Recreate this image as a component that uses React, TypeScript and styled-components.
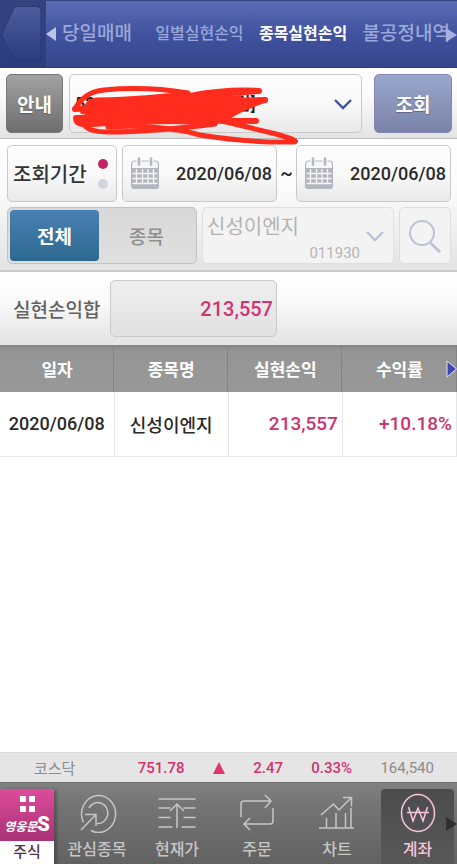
import React from 'react';
import styled, { createGlobalStyle, css } from 'styled-components';

const GlobalStyle = createGlobalStyle`
  * { box-sizing: border-box; }
  body { margin: 0; background: #fff; }
  body, button, input, select {
    font-family: Roboto, "Noto Sans CJK KR", sans-serif;
    letter-spacing: 0;
  }
  button, input, select { margin: 0; padding: 0; cursor: pointer; }
`;

const Page = styled.div`
  min-height: 100vh;
  display: flex;
  flex-direction: column;
  overflow-x: hidden;
`;

const Header = styled.header`
  display: flex;
  height: 68px;
  background: linear-gradient(#5c6db4, #4153a0 50%, #35468b);
  border-top: 1px solid #34447f;
  border-bottom: 1px solid #2c3a76;
`;

const BackButton = styled.button`
  flex: 0 0 46px;
  border: 0;
  background: linear-gradient(#34437f, #2d3c7e);
  svg { display: block; }
`;

const TabList = styled.nav`
  flex: 1;
  min-width: 0;
  display: flex;
  align-items: center;
  justify-content: space-between;
`;

const Tab = styled.button<{ $active?: boolean; $small?: boolean }>`
  border: 0;
  background: none;
  white-space: nowrap;
  line-height: 28px;
  font-size: ${(p) => (p.$small ? 16 : 19)}px;
  font-weight: ${(p) => (p.$active ? 700 : 500)};
  color: ${(p) => (p.$active ? '#fff' : '#9ba7d8')};
`;

const EdgeTab = styled.div<{ $end?: boolean }>`
  position: relative;
  display: flex;
  align-items: center;
  gap: 6px;
  padding-right: ${(p) => (p.$end ? 7 : 8)}px;
`;

const EndArrow = styled.svg`
  position: absolute;
  right: 0;
  top: 8px;
`;

const Panel = styled.section`
  background: linear-gradient(#fff, #fafafa 40%, #e3e3e3);
`;

const AccountPanel = styled(Panel)`
  position: relative;
  display: flex;
  gap: 6px;
  padding: 6px 5px 5px 6px;
  border-bottom: 1px solid #bcbcbc;
`;

const SolidButton = styled.button<{ $tone: 'gray' | 'blue' }>`
  height: 59px;
  border-radius: 5px;
  color: #fff;
  font-size: 19px;
  font-weight: 700;
  text-shadow: 0 1px 1px rgba(0, 0, 0, 0.3);
  ${(p) =>
    p.$tone === 'gray'
      ? css`
          flex: 0 0 57px;
          border: 1px solid #777;
          background: linear-gradient(#a2a2a2, #6d6d6d);
        `
      : css`
          flex: 0 0 78px;
          margin-left: 6px;
          border: 1px solid #8088b2;
          background: linear-gradient(#9ba7cc, #7a82aa);
        `}
`;

const fieldFrame = css`
  border: 1px solid #c9c9c9;
  border-radius: 5px;
  background: linear-gradient(#fdfdfd, #f9f9f9 50%, #e9e9e9);
`;

const SelectWrap = styled.label`
  position: relative;
  flex: 1;
  min-width: 0;
  display: flex;
  ${fieldFrame}
`;

const Chevron = styled.svg`
  position: absolute;
  right: 8px;
  top: 50%;
  margin-top: -8px;
  pointer-events: none;
`;

const AccountSelect = styled.select`
  appearance: none;
  width: 100%;
  border: 0;
  background: none;
  padding: 0 40px 0 5px;
  font-size: 18px;
  font-weight: 500;
  color: #222;
`;

const Scribble = styled.svg`
  position: absolute;
  left: 68px;
  top: 14px;
  z-index: 2;
  pointer-events: none;
`;

const FilterPanel = styled(Panel)`
  display: flex;
  flex-direction: column;
  gap: 5px;
  padding: 6px 6px 6px 7px;
  border-bottom: 2px solid #cacaca;
`;

const FilterRow = styled.div`
  display: flex;
  align-items: stretch;
  height: 57px;
  gap: 5px;
`;

const PeriodButton = styled.button`
  ${fieldFrame}
  flex: 0 0 110px;
  display: flex;
  align-items: center;
  justify-content: space-between;
  padding: 0 8px 0 5px;
  font-size: 20px;
  font-weight: 500;
  color: #333;
  white-space: nowrap;
`;

const Dots = styled.span`
  display: flex;
  flex-direction: column;
  gap: 10px;
`;

const Dot = styled.span<{ $on?: boolean }>`
  width: 10px;
  height: 10px;
  border-radius: 50%;
  background: ${(p) => (p.$on ? '#c2255f' : '#d2d5e0')};
`;

const DateField = styled.label`
  ${fieldFrame}
  flex: 1;
  min-width: 0;
  display: flex;
  align-items: center;
  padding: 0 4px 0 8px;
  svg { flex: none; }
`;

const DateInput = styled.input`
  flex: 1;
  min-width: 0;
  border: 0;
  background: none;
  text-align: right;
  font-size: 18px;
  font-weight: 500;
  color: #2a2a2a;
`;

const Tilde = styled.span`
  align-self: center;
  width: 9px;
  font-size: 19px;
  font-weight: 500;
  color: #222;
  display: flex;
  justify-content: center;
`;

const Segmented = styled.div`
  flex: 0 0 190px;
  display: flex;
  padding: 2px;
  border: 1px solid #c2c2c2;
  border-radius: 5px;
  background: linear-gradient(#d8d8d8, #dfdfdf);
`;

const Segment = styled.button<{ $active?: boolean }>`
  flex: ${(p) => (p.$active ? '0 0 89px' : '1 1 0')};
  border: 0;
  border-radius: 4px;
  font-size: 19px;
  font-weight: ${(p) => (p.$active ? 700 : 500)};
  color: ${(p) => (p.$active ? '#fff' : '#8e8e8e')};
  background: ${(p) => (p.$active ? 'linear-gradient(#4a80b3, #2c698f)' : 'none')};
`;

const StockPicker = styled.button`
  position: relative;
  flex: 1;
  min-width: 0;
  display: flex;
  flex-direction: column;
  justify-content: space-between;
  padding: 6px 33px 0 4px;
  border: 1px solid #dfdfdf;
  border-radius: 5px;
  background: #f3f3f3;
  color: #b3b3b3;
  text-align: left;
`;

const StockName = styled.span`
  font-size: 20px;
  line-height: 26px;
`;

const StockCode = styled.span`
  align-self: flex-end;
  font-size: 15px;
  line-height: 20px;
`;

const SearchButton = styled.button`
  flex: 0 0 52px;
  display: flex;
  align-items: center;
  justify-content: center;
  border: 1px solid #dfdfdf;
  border-radius: 5px;
  background: #f3f3f3;
`;

const SummaryPanel = styled(Panel)`
  display: flex;
  align-items: center;
  gap: 10px;
  height: 73px;
  padding: 0 0 1px 13px;
`;

const SummaryLabel = styled.span`
  width: 87px;
  white-space: nowrap;
  font-size: 19px;
  font-weight: 500;
  color: #626262;
`;

const SummaryValue = styled.output`
  flex: 0 0 167px;
  height: 57px;
  padding-right: 3px;
  border: 1px solid #c9c9c9;
  border-radius: 5px;
  background: linear-gradient(#efefef, #e1e1e1);
  text-align: right;
  font-size: 20px;
  font-weight: 500;
  line-height: 56px;
  color: #d03472;
`;

const TableArea = styled.div`
  position: relative;
  flex: 1;
`;

const Table = styled.table`
  width: 100%;
  table-layout: fixed;
  border-collapse: collapse;
`;

const HeadCell = styled.th`
  height: 47px;
  padding: 0;
  background: linear-gradient(#858585, #959595 12%, #989898);
  box-shadow: inset -1px 0 #848484;
  font-size: 17px;
  font-weight: 700;
  color: #fff;
`;

const Cell = styled.td<{ $gain?: boolean }>`
  height: 64px;
  padding: 0 ${(p) => (p.$gain ? 4 : 0)}px 0 0;
  border-bottom: 1px solid #e6e6e6;
  border-right: 1px solid #e6e6e6;
  text-align: ${(p) => (p.$gain ? 'right' : 'center')};
  font-size: ${(p) => (p.$gain ? 19 : 18)}px;
  font-weight: 500;
  color: ${(p) => (p.$gain ? '#cb3370' : '#2a2a2a')};
  white-space: nowrap;
`;

const MoreColumns = styled.button`
  position: absolute;
  right: 0;
  top: 15px;
  border: 0;
  background: none;
  svg { display: block; }
`;

const Ticker = styled.div`
  display: flex;
  align-items: center;
  justify-content: space-between;
  height: 30px;
  padding: 0 23px 0 34px;
  background: #e5e5e5;
  border-top: 1px solid #dcdcdc;
  font-size: 15px;
  color: #8c8c8c;
`;

const TickerName = styled.span`
  margin-right: 34px;
`;

const Gain = styled.span`
  font-weight: 500;
  color: #d3326f;
`;

const BottomNav = styled.nav`
  display: flex;
  height: 82px;
  padding-top: 6px;
  background: linear-gradient(#818181, #757575 25%, #626262);
  border-top: 1px solid #707070;
`;

const HomeButton = styled.button`
  flex: 0 0 54px;
  margin-right: 3px;
  display: flex;
  flex-direction: column;
  border: 0;
  border-radius: 0 4px 0 0;
  overflow: hidden;
  background: #fff;
  box-shadow: 3px 0 3px rgba(0, 0, 0, 0.25);
`;

const HomeBrand = styled.span`
  width: 100%;
  height: 52px;
  display: flex;
  flex-direction: column;
  align-items: center;
  padding-top: 7px;
  background: linear-gradient(#dd4b99, #a93277);
  color: #fff;
  white-space: nowrap;
`;

const BrandText = styled.span`
  display: flex;
  align-items: baseline;
  font-size: 12px;
  font-weight: 700;
  font-style: italic;
  line-height: 24px;
`;

const BrandMark = styled.b`
  font-size: 20px;
  font-style: normal;
`;

const HomeLabel = styled.span`
  width: 100%;
  text-align: center;
  font-size: 15px;
  font-weight: 500;
  line-height: 23px;
  color: #4e2f47;
`;

const NavItem = styled.button<{ $active?: boolean }>`
  position: relative;
  flex: ${(p) => (p.$active ? '0 0 73px' : '1 1 0')};
  min-width: 0;
  margin: 0 ${(p) => (p.$active ? '3px 0 4px' : '0')};
  display: flex;
  flex-direction: column;
  align-items: center;
  gap: 5px;
  padding: 4px 0 0;
  border: 0;
  border-radius: 4px 4px 0 0;
  background: ${(p) => (p.$active ? 'linear-gradient(#4c4c4c, #585858)' : 'none')};
  color: ${(p) => (p.$active ? '#f8c5da' : '#c6c6c6')};
  font-size: 16px;
  font-weight: 500;
  line-height: 24px;
  white-space: nowrap;
  svg { display: block; }
`;

const NextMenu = styled.svg`
  position: absolute;
  right: -3px;
  top: 28px;
`;

const CalendarIcon = () => (
  <svg width="28" height="33" viewBox="0 0 28 33" fill="none" aria-hidden="true">
    <rect x="0.6" y="4" width="26.8" height="27.5" rx="3" fill="#f6f6f6" stroke="#b4b5bf" strokeWidth="1.2" />
    <path d="M0 11h28v17.5q0 3.5-3.5 3.5h-21Q0 32 0 28.5z" fill="#b4b5bf" />
    <path d="M1.500 16.500h25M1.500 21.500h25M1.500 26.500h25M5.500 12v15M11.500 12v15M17 12v15M22.500 12v15" stroke="#f6f6f6" strokeWidth="1.300" />
    <path d="M8 1v6M20 1v6" stroke="#f6f6f6" strokeWidth="5" />
    <path d="M8 1.500v6M20 1.500v6" stroke="#b4b5bf" strokeWidth="2.400" strokeLinecap="round" />
  </svg>
);

const ChevronDown = ({ color }: { color: string }) => (
  <Chevron width="20" height="16" viewBox="0 0 20 16" aria-hidden="true">
    <path d="M2 4l8 8 8-8" fill="none" stroke={color} strokeWidth="2.400" />
  </Chevron>
);

const NavIcon = ({ children }: { children: React.ReactNode }) => (
  <svg width="40" height="40" viewBox="0 0 40 40" fill="none" stroke="currentColor" strokeWidth="1.500" aria-hidden="true">
    {children}
  </svg>
);

const menu = [
  {
    label: '관심종목',
    icon: (
      <>
        <path d="M6.500 29.500A17 18.500 0 1 1 14 37.500" />
        <path d="M12 15a10 10.500 0 1 1 8 15.500" />
        <path d="M4 37L18.500 22M8 21.500h11V33" />
      </>
    ),
  },
  {
    label: '현재가',
    icon: <path d="M1.500 6h37M1.500 15h12M26.500 15h12M1.500 24.500h12M26.500 24.500h12M1.500 34h14M24.500 34h14M20 35V11M13 18l7-7 7 7" />,
  },
  {
    label: '주문',
    icon: (
      <>
        <path d="M4 24V11q0-3 3-3h26M28 2l6 6-6 7" />
        <path d="M36 15v13q0 3-3 3H7M13 25l-6 6 6 6" />
      </>
    ),
  },
  {
    label: '차트',
    icon: (
      <path d="M2 35h35M9.500 35V25M19 35V20M28.500 35V20M34 35V15M4 22L16.500 11l5.500 6L34 5M26 4.500h8.500v9" />
    ),
  },
  {
    label: '계좌',
    active: true,
    icon: (
      <>
        <ellipse cx="20" cy="20" rx="16.5" ry="18.5" />
        <path d="M10.500 14l4.500 14 5-13 5 13 4.500-14M9 19.500h22" />
      </>
    ),
  },
];

export default function App() {
  return (
    <>
      <GlobalStyle />
      <Page>
        <Header>
          <BackButton aria-label="뒤로">
            <svg width="46" height="66" viewBox="0 0 46 66" aria-hidden="true">
              <defs>
                <linearGradient id="back" x1="0" y1="0" x2="0" y2="1">
                  <stop offset="0" stopColor="#4d5c9c" />
                  <stop offset="1" stopColor="#2c3b7d" />
                </linearGradient>
              </defs>
              <path d="M16 5.500h21q4 0 4 4v47q0 4-4 4H16q-2 0-3-3L1.500 34 13 9q1-3.500 3-3.500z" fill="url(#back)" stroke="#2b3871" />
            </svg>
          </BackButton>
          <TabList>
            <EdgeTab>
              <svg width="10" height="14" viewBox="0 0 10 14" aria-hidden="true">
                <path d="M10 0v14L0 7z" fill="#bcc5e8" />
              </svg>
              <Tab>당일매매</Tab>
            </EdgeTab>
            <Tab $small>일별실현손익</Tab>
            <Tab $small $active>종목실현손익</Tab>
            <EdgeTab $end>
              <Tab>불공정내역</Tab>
              <EndArrow width="11" height="14" viewBox="0 0 11 14" aria-hidden="true">
                <path d="M0 0v14l11-7z" fill="#a6b1dc" />
              </EndArrow>
            </EdgeTab>
          </TabList>
        </Header>

        <AccountPanel>
          <SolidButton $tone="gray">안내</SolidButton>
          <SelectWrap>
            <AccountSelect aria-label="계좌 선택">
              <option>{'52' + '\u00a0'.repeat(31) + '림]'}</option>
            </AccountSelect>
            <ChevronDown color="#3f51a0" />
          </SelectWrap>
          <SolidButton $tone="blue">조회</SolidButton>
          <Scribble width="234" height="66" viewBox="68 82 234 66" fill="none" stroke="#ff2c1e" strokeLinecap="round" strokeLinejoin="round" aria-hidden="true">
            <path d="M90 101L150 98 200 98 240 98 244 106 228 117 200 123 120 120 82 112z" fill="#ff2c1e" strokeWidth="4" />
            <path d="M75 109Q84 92 104 90Q145 86 188 93Q150 99 96 100" strokeWidth="5" />
            <path d="M75 109Q110 108 190 96Q225 89 259 91Q215 93 160 103L265 100" strokeWidth="6" />
            <path d="M265 100Q240 108 224 119Q160 118 76 118Q76 126 92 124Q150 120 256 121" strokeWidth="6" />
            <path d="M84 121Q82 132 110 132Q150 132 215 124" strokeWidth="5" />
            <path d="M108 127Q160 124 200 135Q250 143 294 142Q301 141 276 134L222 121" strokeWidth="5" />
          </Scribble>
        </AccountPanel>

        <FilterPanel>
          <FilterRow>
            <PeriodButton>
              조회기간
              <Dots>
                <Dot $on />
                <Dot />
              </Dots>
            </PeriodButton>
            <DateField>
              <CalendarIcon />
              <DateInput aria-label="시작일" defaultValue="2020/06/08" />
            </DateField>
            <Tilde>~</Tilde>
            <DateField>
              <CalendarIcon />
              <DateInput aria-label="종료일" defaultValue="2020/06/08" />
            </DateField>
          </FilterRow>
          <FilterRow>
            <Segmented>
              <Segment $active>전체</Segment>
              <Segment>종목</Segment>
            </Segmented>
            <StockPicker>
              <StockName>신성이엔지</StockName>
              <StockCode>011930</StockCode>
              <ChevronDown color="#bcc2d8" />
            </StockPicker>
            <SearchButton aria-label="종목 검색">
              <svg width="34" height="36" viewBox="0 0 34 36" fill="none" stroke="#bcc2d8" aria-hidden="true">
                <circle cx="14" cy="15" r="12" strokeWidth="2" />
                <path d="M22.500 25L32 34" strokeWidth="3" />
              </svg>
            </SearchButton>
          </FilterRow>
        </FilterPanel>

        <SummaryPanel>
          <SummaryLabel>실현손익합</SummaryLabel>
          <SummaryValue>213,557</SummaryValue>
        </SummaryPanel>

        <TableArea>
          <Table>
            <thead>
              <tr>
                <HeadCell>일자</HeadCell>
                <HeadCell>종목명</HeadCell>
                <HeadCell>실현손익</HeadCell>
                <HeadCell>수익률</HeadCell>
              </tr>
            </thead>
            <tbody>
              <tr>
                <Cell>2020/06/08</Cell>
                <Cell>신성이엔지</Cell>
                <Cell $gain>213,557</Cell>
                <Cell $gain>+10.18%</Cell>
              </tr>
            </tbody>
          </Table>
          <MoreColumns aria-label="다음 항목">
            <svg width="11" height="18" viewBox="0 0 11 18" aria-hidden="true">
              <path d="M1 1v16l9.500-8z" fill="#3f45b5" stroke="#dfe2f5" />
            </svg>
          </MoreColumns>
        </TableArea>

        <Ticker>
          <TickerName>코스닥</TickerName>
          <Gain>751.78</Gain>
          <svg width="12" height="12" viewBox="0 0 12 12" role="img" aria-label="상승">
            <path d="M6 0l6 12H0z" fill="#e0336f" />
          </svg>
          <Gain>2.47</Gain>
          <Gain>0.33%</Gain>
          <span>164,540</span>
        </Ticker>

        <BottomNav>
          <HomeButton>
            <HomeBrand>
              <svg width="16" height="16" viewBox="0 0 16 16" fill="#fff" aria-hidden="true">
                <path d="M1 0h6v6H1zM10 0h6v6h-6zM1 10h6v6H1zM10 10h6v6h-6z" />
              </svg>
              <BrandText>
                영웅문<BrandMark>S</BrandMark>
              </BrandText>
            </HomeBrand>
            <HomeLabel>주식</HomeLabel>
          </HomeButton>
          {menu.map((item) => (
            <NavItem key={item.label} $active={item.active}>
              <NavIcon>{item.icon}</NavIcon>
              {item.label}
              {item.active && (
                <NextMenu width="11" height="14" viewBox="0 0 11 14" aria-hidden="true">
                  <path d="M0 0v14l11-7z" fill="#303030" />
                </NextMenu>
              )}
            </NavItem>
          ))}
        </BottomNav>
      </Page>
    </>
  );
}
